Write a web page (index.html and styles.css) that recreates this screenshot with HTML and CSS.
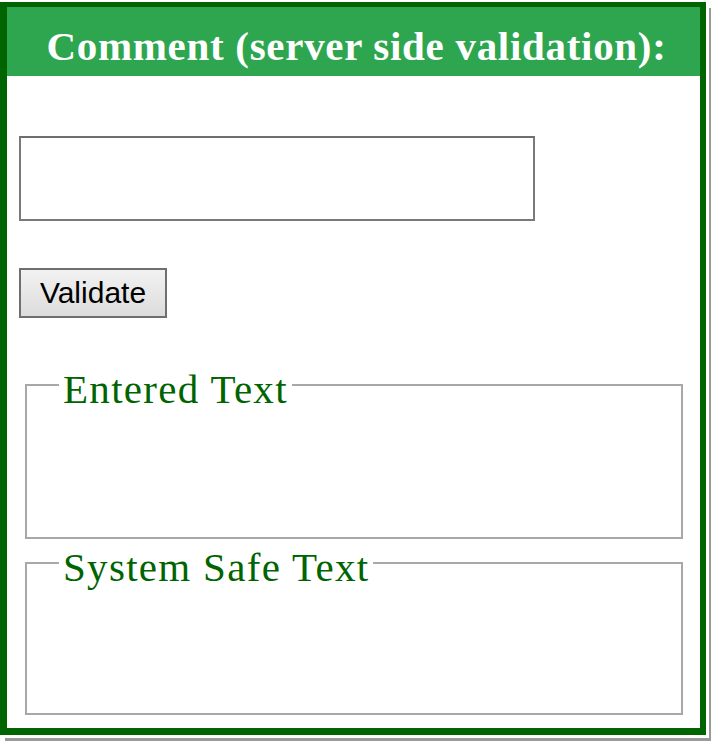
FILE: index.html
```html
<!DOCTYPE html>
<html lang="en">
<head>
    <meta charset="UTF-8">
    <title>Comment validation</title>
    <link rel="stylesheet" href="styles.css">
</head>
<body>
    <div class="panel">
        <h1 class="panel-title">Comment (server side validation):</h1>
        <div class="panel-body">
            <input class="comment-input" type="text">
            <button class="validate-btn" type="button">Validate</button>
            <fieldset class="result">
                <legend>Entered Text</legend>
            </fieldset>
            <fieldset class="result">
                <legend>System Safe Text</legend>
            </fieldset>
        </div>
    </div>
</body>
</html>
```

FILE: styles.css
```css
:root {
    --frame-color: #006400;
    --title-bg: #2ea64f;
    --line-color: #a8a8a8;
}

* {
    box-sizing: border-box;
    margin: 0;
    padding: 0;
}

body {
    background: #fff;
    font-family: 'Liberation Serif', serif;
    padding: 2px 0 9px;
}

.panel {
    width: 706px;
    height: 733px;
    border-style: solid;
    border-color: var(--frame-color);
    border-width: 5px 6px 7px 7px;
    background: #fff;
    display: flex;
    flex-direction: column;
    box-shadow: 3px 3px 0 0 #fff, 5px 6px 0 0 #9a9a9a;
}

.panel-title {
    height: 69px;
    padding-left: 6px;
    background: var(--title-bg);
    color: #fff;
    font-family: 'Liberation Serif', serif;
    font-weight: bold;
    font-size: 41px;
    letter-spacing: 0.7px;
    text-align: center;
    line-height: 78px;
    white-space: nowrap;
}

.panel-body {
    flex: 1;
    display: flex;
    flex-direction: column;
    align-items: flex-start;
    padding: 60px 17px 13px 12px;
}

.comment-input {
    width: 516px;
    height: 85px;
    border: 2px solid #7a7a7a;
    border-top-color: #6e6e6e;
    background: #fff;
}

.validate-btn {
    margin-top: 47px;
    width: 148px;
    height: 50px;
    border: 2px solid #6f6f6f;
    background: linear-gradient(#f2f2f2, #dcdcdc);
    font-family: 'Liberation Sans', Arial, sans-serif;
    font-size: 30px;
    color: #000;
}

.result {
    align-self: stretch;
    margin-left: 6px;
    border: 2px solid var(--line-color);
    height: 178px;
    padding: 0;
}

.result + .result {
    margin-top: 0;
    height: 176px;
}

.validate-btn + .result {
    margin-top: 43px;
}

.result legend {
    margin-left: 32px;
    padding: 8px 4px 0;
    color: var(--frame-color);
    font-size: 41px;
    letter-spacing: 1.3px;
    line-height: 40px;
}
```
